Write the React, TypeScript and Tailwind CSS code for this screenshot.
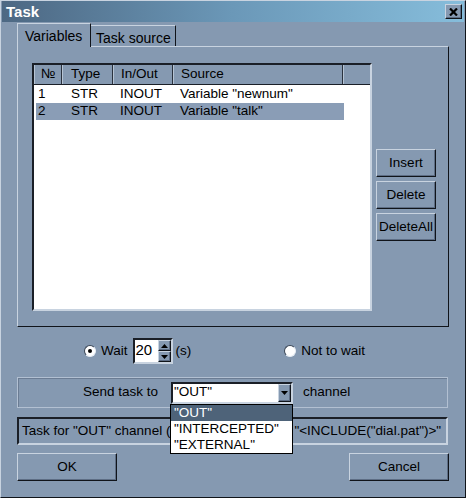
import React from "react";

// Flat "classic" dialog look: light top/left edge, dark bottom/right edge.
const raised =
  "border border-t-[#c8d3e0] border-l-[#c8d3e0] border-r-[#10141a] border-b-[#10141a] shadow-[inset_-1px_-1px_0_#5d6d84]";
const sunken =
  "border-2 border-t-[#1a1f27] border-l-[#1a1f27] border-r-[#c8d3e0] border-b-[#c8d3e0]";

const columns = [
  { title: "№", w: "w-[28px]", pl: "pl-[6px]" },
  { title: "Type", w: "w-[51px]", pl: "pl-[8px]" },
  { title: "In/Out", w: "w-[60px]", pl: "pl-[7px]" },
  { title: "Source", w: "w-[170px]", pl: "pl-[7px]" },
];

const rows = [
  { n: "1", type: "STR", io: "INOUT", src: 'Variable "newnum"', sel: false },
  { n: "2", type: "STR", io: "INOUT", src: 'Variable "talk"', sel: true },
];

function Radio({ checked }: { checked?: boolean }) {
  return (
    <span className="flex h-[12px] w-[12px] items-center justify-center rounded-full border border-t-[#3a4656] border-l-[#3a4656] border-r-[#e6ecf3] border-b-[#e6ecf3] bg-white">
      {checked && <span className="h-[4px] w-[4px] rounded-full bg-black" />}
    </span>
  );
}

function Arrow({ up }: { up?: boolean }) {
  return (
    <svg width="7" height="4" viewBox="0 0 7 4" aria-hidden>
      <path d={up ? "M0 4 L3.5 0 L7 4 Z" : "M0 0 L7 0 L3.5 4 Z"} fill="#000" />
    </svg>
  );
}

function Btn({ children, w }: { children: React.ReactNode; w: string }) {
  return (
    <div className={`${raised} ${w} flex h-[28px] items-center justify-center bg-[#8599b1] text-[13.5px] text-black`}>
      {children}
    </div>
  );
}

export default function App() {
  return (
    <div className="flex h-[498px] w-[466px] flex-col border border-t-[#c8d3e0] border-l-[#c8d3e0] border-r-[#10141a] border-b-[#10141a] bg-[#8599b1] font-['Liberation_Sans',Arial,sans-serif] text-black">
      {/* title bar */}
      <div className="mx-[1px] flex h-[21px] shrink-0 items-center justify-between bg-gradient-to-r from-[#4d6883] via-[#6b98b8] to-[#86bddb]">
        <span className="pl-[4px] text-[15px] font-bold leading-none text-white">Task</span>
        <div className={`${raised} mr-[2px] flex h-[15px] w-[17px] items-center justify-center bg-[#8599b1]`}>
          <svg width="9" height="8" viewBox="0 0 9 8" aria-hidden>
            <path d="M1 0.5 L8 7.5 M8 0.5 L1 7.5" stroke="#000" strokeWidth="2.2" />
          </svg>
        </div>
      </div>

      {/* tabs */}
      <div className="flex h-[24px] shrink-0 items-start pl-[16px]">
        <div className="relative z-10 mt-[1px] flex h-[24px] w-[74px] items-start border-l border-r border-t border-t-[#c8d3e0] border-l-[#c8d3e0] border-r-[#10141a] bg-[#8599b1] pl-[7px] pt-[2px] text-[14px]">
          Variables
        </div>
        <div className="mt-[3px] flex h-[21px] w-[85px] items-start border-r border-t border-t-[#c8d3e0] border-r-[#10141a] pl-[5px] pt-[2px] text-[14px]">
          Task source
        </div>
      </div>

      {/* tab panel */}
      <div className="ml-[16px] flex h-[281px] w-[432px] shrink-0 border border-t-[#c8d3e0] border-l-[#c8d3e0] border-r-[#10141a] border-b-[#10141a]">
        <div className={`${sunken} ml-[14px] mt-[16px] h-[248px] w-[340px] bg-white`}>
          <div className="flex h-[20px] border-b border-b-[#1a1f27] bg-[#8599b1] text-[13.5px]">
            {columns.map((c) => (
              <div
                key={c.title}
                className={`${c.w} ${c.pl} flex items-center border-r border-l border-r-[#2a323e] border-l-[#b6c4d4]`}
              >
                {c.title}
              </div>
            ))}
            <div className="flex-1 border-l border-l-[#b6c4d4]" />
          </div>
          <div className="pt-[1px]">
            {rows.map((r) => (
              <div
                key={r.n}
                className={`ml-[2px] flex h-[17px] w-[308px] items-center text-[13.5px] ${r.sel ? "bg-[#8a9db6]" : ""}`}
              >
                <span className="w-[26px] pl-[2px]">{r.n}</span>
                <span className="w-[51px] pl-[9px]">{r.type}</span>
                <span className="w-[60px] pl-[7px]">{r.io}</span>
                <span className="pl-[7px]">{r.src}</span>
              </div>
            ))}
          </div>
        </div>
        <div className="ml-[4px] mt-[102px] flex flex-col gap-[4px]">
          <Btn w="w-[60px]">Insert</Btn>
          <Btn w="w-[60px]">Delete</Btn>
          <Btn w="w-[60px]">DeleteAll</Btn>
        </div>
      </div>

      {/* wait row */}
      <div className="mt-[11px] flex h-[26px] shrink-0 items-center text-[13.5px]">
        <span className="ml-[83px]">
          <Radio checked />
        </span>
        <span className="ml-[5px]">Wait</span>
        <div className={`${sunken} ml-[5px] flex h-[26px] w-[40px] bg-white`}>
          <span className="flex-1 pl-[1px] pt-[1px] text-[15px] leading-[18px]">20</span>
          <div className="flex w-[13px] flex-col">
            <div className={`${raised} flex h-[11px] items-center justify-center bg-[#8599b1]`}>
              <Arrow up />
            </div>
            <div className={`${raised} flex h-[11px] items-center justify-center bg-[#8599b1]`}>
              <Arrow />
            </div>
          </div>
        </div>
        <span className="ml-[3px]">(s)</span>
        <span className="ml-[93px]">
          <Radio />
        </span>
        <span className="ml-[5px]">Not to wait</span>
      </div>

      {/* send task to */}
      <div className="relative z-20 ml-[16px] mt-[13px] flex h-[31px] w-[431px] shrink-0 items-center border border-[#b2c0d2] text-[13.5px] shadow-[inset_1px_1px_0_#6b7c93]">
        <span className="ml-[65px]">Send task to</span>
        <div className="relative ml-[13px]">
          <div className={`${sunken} flex h-[22px] w-[122px] items-center bg-white`}>
            <span className="flex-1 pl-[1px] text-[13.5px]">"OUT"</span>
            <div className={`${raised} flex h-[18px] w-[13px] items-center justify-center bg-[#8599b1]`}>
              <Arrow />
            </div>
          </div>
          <div className="absolute left-[-1px] top-[22px] flex w-[123px] flex-col border border-black bg-white text-[13.5px] leading-[16px]">
            <span className="flex h-[16px] items-center bg-[#4e6379] pl-[3px] text-white">"OUT"</span>
            <span className="flex h-[16px] items-center pl-[3px]">"INTERCEPTED"</span>
            <span className="flex h-[16px] items-center pl-[3px]">"EXTERNAL"</span>
          </div>
        </div>
        <span className="ml-[10px]">channel</span>
      </div>

      {/* task text */}
      <div className={`${sunken} ml-[16px] mt-[9px] flex h-[28px] w-[431px] shrink-0 items-center overflow-hidden whitespace-nowrap text-[13.5px]`}>
        <span className="pl-[3px]">Task for "OUT" channel (</span>
        <span className="inline-block w-[124px] overflow-hidden">newnum, talk) = </span>
        <span>"&lt;INCLUDE("dial.pat")&gt;"</span>
      </div>

      {/* footer */}
      <div className="ml-[16px] mt-[8px] flex w-[432px] shrink-0 justify-between">
        <Btn w="w-[100px]">OK</Btn>
        <Btn w="w-[100px]">Cancel</Btn>
      </div>
    </div>
  );
}
